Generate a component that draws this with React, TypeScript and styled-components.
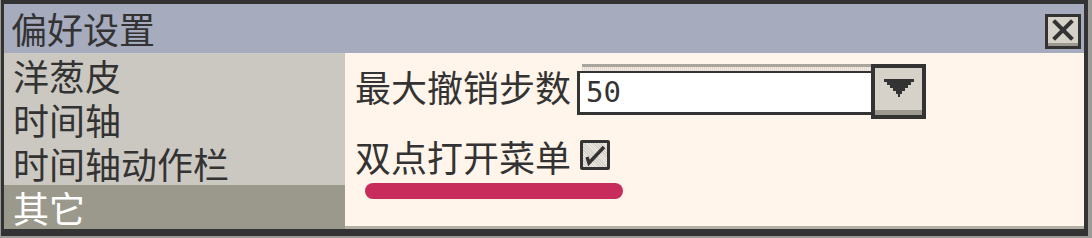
import styled, { createGlobalStyle } from "styled-components";

const GlobalStyle = createGlobalStyle`
    html, body {
        margin: 0;
        padding: 0;
        background: #9c9b97;
        overflow: hidden;
    }
    body {
        font-family: "Noto Sans CJK SC", "Noto Sans", sans-serif;
        color: #333;
    }
`;

const categories = ["洋葱皮", "时间轴", "时间轴动作栏", "其它"];

const App = () => {
    return (
        <>
            <GlobalStyle />
            <Window>
                <TitleBar>
                    <Title>偏好设置</Title>
                    <CloseButton aria-label="close">
                        <svg width="22" height="22" viewBox="0 0 22 22">
                            <path
                                d="M3 3 L19 19 M19 3 L3 19"
                                stroke="#333"
                                strokeWidth="4"
                                strokeLinecap="square"
                            />
                        </svg>
                    </CloseButton>
                </TitleBar>
                <Body>
                    <Sidebar>
                        {categories.map((c, i) => (
                            <Item key={c} $active={i === categories.length - 1}>
                                {c}
                            </Item>
                        ))}
                    </Sidebar>
                    <Panel>
                        <Row>
                            <Label>最大撤销步数</Label>
                            <Input>50</Input>
                            <DropButton aria-label="open">
                                <svg width="30" height="18" viewBox="0 0 30 18">
                                    <path
                                        d="M0 0 H30 V3 H27 V6 H24 V9 H21 V12 H18 V15 H16 V18 H14 V15 H12 V12 H9 V9 H6 V6 H3 V3 H0 Z"
                                        fill="#333"
                                    />
                                </svg>
                            </DropButton>
                        </Row>
                        <CheckRow>
                            <Label>双点打开菜单</Label>
                            <Check>
                                <svg width="24" height="24" viewBox="0 0 24 24">
                                    <path
                                        d="M4 14 L6 20 L21 4"
                                        stroke="#333"
                                        strokeWidth="3.5"
                                        fill="none"
                                    />
                                </svg>
                            </Check>
                        </CheckRow>
                        <Underline />
                    </Panel>
                </Body>
            </Window>
        </>
    );
};

export default App;

const Window = styled.div`
    margin-left: 1px;
    width: 1080px;
    border-top: 4px solid #333;
    border-left: 3px solid #333;
    border-right: 4px solid #333;
    border-bottom: 7px solid #333;
    box-shadow: 0 1px 0 #8a8985;
    background: #fff5ea;
`;

const TitleBar = styled.div`
    height: 49px;
    background: #a6abbe;
    display: flex;
    align-items: center;
    justify-content: space-between;
    padding: 0 3px 0 7px;
    box-sizing: border-box;
`;

const Title = styled.div`
    font-size: 36px;
    line-height: 49px;
    color: #333;
`;

const CloseButton = styled.div`
    width: 36px;
    height: 35px;
    margin-top: 6px;
    box-sizing: border-box;
    border: 3px solid #333;
    background: #d6d2c9;
    box-shadow: inset 0 -3px 0 #9c9a8e;
    display: flex;
    align-items: center;
    justify-content: center;
    padding-bottom: 3px;
`;

const Body = styled.div`
    display: flex;
    height: 176px;
`;

const Sidebar = styled.div`
    width: 341px;
    background: #cbc8c1;
    display: flex;
    flex-direction: column;
`;

const Item = styled.div<{ $active?: boolean }>`
    height: 44px;
    line-height: 44px;
    padding-left: 9px;
    font-size: 36px;
    color: ${(p) => (p.$active ? "#fff" : "#333")};
    background: ${(p) => (p.$active ? "#9b998c" : "transparent")};
    ${(p) => (p.$active ? "flex: 1;" : "")}
`;

const Panel = styled.div`
    flex: 1;
    background: #fff5ea;
    border-bottom: 3px solid #b4afa5;
    padding: 11px 0 0 10px;
    box-sizing: border-box;
`;

const Row = styled.div`
    display: flex;
    align-items: flex-start;
`;

const Label = styled.div`
    font-size: 36px;
    line-height: 44px;
    color: #333;
`;

const Input = styled.div`
    margin-left: 6px;
    width: 294px;
    height: 51px;
    box-sizing: border-box;
    background: #fff;
    border-top: 9px solid #333;
    border-left: 3px solid #333;
    border-bottom: 3px solid #333;
    position: relative;
    font-family: "DejaVu Sans Mono", monospace;
    font-size: 29px;
    line-height: 39px;
    padding-left: 6px;
    color: #333;
    &::before {
        content: "";
        position: absolute;
        left: 2px;
        right: 0;
        top: -9px;
        height: 7px;
        background: repeating-linear-gradient(90deg, #e2d9d0 0 1px, #f2eae2 1px 2px);
        border-top: 3px solid #aaa59b;
        box-sizing: border-box;
    }
    &::after {
        content: "";
        position: absolute;
        left: -3px;
        width: 5px;
        top: -9px;
        height: 7px;
        background: #fff5ea;
    }
`;

const DropButton = styled.div`
    width: 55px;
    height: 55px;
    box-sizing: border-box;
    border: 4px solid #333;
    background: #d6d2c9;
    box-shadow: inset 0 -5px 0 #9c9a8e;
    display: flex;
    align-items: center;
    justify-content: center;
    padding-bottom: 8px;
`;

const CheckRow = styled.div`
    display: flex;
    align-items: center;
    gap: 9px;
    margin-top: 15px;
`;

const Check = styled.div`
    width: 30px;
    height: 30px;
    box-sizing: border-box;
    border: 3px solid #333;
    border-radius: 2px;
    background: repeating-linear-gradient(45deg, #d3cfc7 0 1px, #ece8e1 1px 2px);
    display: flex;
    align-items: center;
    justify-content: center;
    margin-top: -2px;
`;

const Underline = styled.div`
    margin: 5px 0 0 10px;
    width: 258px;
    height: 16px;
    border-radius: 8px;
    background: #c82c5d;
`;
